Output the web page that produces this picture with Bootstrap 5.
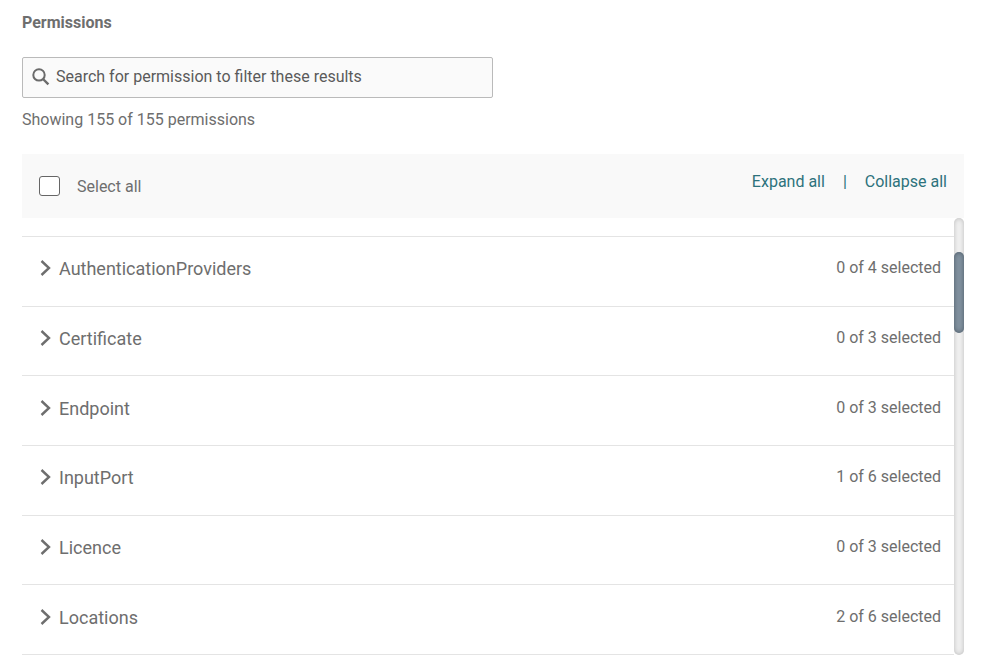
<!DOCTYPE html>
<html lang="en">
<head>
<meta charset="utf-8">
<meta name="viewport" content="width=device-width, initial-scale=1">
<title>Permissions</title>
<link href="https://cdn.jsdelivr.net/npm/bootstrap@5.3.0/dist/css/bootstrap.min.css" rel="stylesheet">
<style>
body { font-family: Roboto, "Liberation Sans", sans-serif; font-size: 16px; line-height: 24px; color: #6e6e6e; background: #fff; }
.page { padding: 11px 21px 15px 22px; }
.page-title { font-size: 16px; line-height: 24px; margin-bottom: 22px; }
.search-box { height: 41px; padding: 0 9px 2px; background: #fafafa; border: 1px solid #bababa; border-radius: 2px; }
.search-box input { margin-left: 6px; color: #5a5a5a; outline: 0; }
.search-box input::placeholder { color: #5a5a5a; opacity: 1; }
.result-count { margin: 10px 0 22px; }
.toolbar { height: 64px; padding: 0 17px; background: #f9f9f9; }
.toolbar .form-check-input { width: 21px; height: 20px; border: 1px solid #666; border-radius: 3px; background-color: #fff; }
.toolbar label { margin-left: 17px; padding-top: 2px; }
.toolbar-links { gap: 18px; padding-bottom: 8px; color: #2d727c; }
.toolbar-links a { color: #2d727c; }
.perm-list { padding-top: 18px; }
.perm-row { border-color: #e4e4e4 !important; padding: 0 13px 4px 18px; color: #6e6e6e; }
.perm-name { font-size: 18px; gap: 7px; }
.perm-name svg { margin-bottom: 2px; }
.perm-count { padding-bottom: 2px; }
.scroll-track { width: 10px; padding-top: 34px; border-radius: 5px; background: #f0f0f0; box-shadow: inset 0 0 5px #bbb; }
.scroll-thumb { height: 81px; border-radius: 5px; background: #8292a0; box-shadow: inset 0 0 5px #4c5a66; }
</style>
<script defer src="https://cdn.jsdelivr.net/npm/bootstrap@5.3.0/dist/js/bootstrap.bundle.min.js"></script>
</head>
<body>
<svg class="d-none" aria-hidden="true">
  <symbol id="chevron" viewBox="0 0 12 18"><path d="M1.5 2l7.5 7L1.5 16" fill="none" stroke="currentColor" stroke-width="2.4"/></symbol>
</svg>
<main class="page d-flex flex-column min-vh-100">
  <h1 class="page-title fw-bold">Permissions</h1>
  <div class="col-6">
    <div class="search-box d-flex align-items-center">
      <svg width="18" height="18" viewBox="0 0 18 18" fill="none" stroke="#6b6b6b" aria-hidden="true"><circle cx="7" cy="6.9" r="5.7" stroke-width="2"/><path d="M11 11l5.4 5.4" stroke-width="2.4"/></svg>
      <input class="border-0 bg-transparent p-0 flex-grow-1" type="text" placeholder="Search for permission to filter these results" aria-label="Search for permission to filter these results">
    </div>
  </div>
  <p class="result-count">Showing 155 of 155 permissions</p>
  <div class="toolbar d-flex align-items-center justify-content-between">
    <div class="d-flex align-items-center">
      <input class="form-check-input m-0" type="checkbox" id="selectAll">
      <label for="selectAll">Select all</label>
    </div>
    <div class="toolbar-links d-flex">
      <a class="text-decoration-none" href="#">Expand all</a><span>|</span><a class="text-decoration-none" href="#">Collapse all</a>
    </div>
  </div>
  <div class="d-flex flex-grow-1">
    <div class="perm-list d-flex flex-column flex-grow-1 border-0">
      <button type="button" class="perm-row flex-fill d-flex align-items-center justify-content-between bg-transparent border-0 border-top"><span class="perm-name d-flex align-items-center"><svg width="12" height="18" aria-hidden="true"><use href="#chevron"/></svg>AuthenticationProviders</span><span class="perm-count">0 of 4 selected</span></button>
      <button type="button" class="perm-row flex-fill d-flex align-items-center justify-content-between bg-transparent border-0 border-top"><span class="perm-name d-flex align-items-center"><svg width="12" height="18" aria-hidden="true"><use href="#chevron"/></svg>Certificate</span><span class="perm-count">0 of 3 selected</span></button>
      <button type="button" class="perm-row flex-fill d-flex align-items-center justify-content-between bg-transparent border-0 border-top"><span class="perm-name d-flex align-items-center"><svg width="12" height="18" aria-hidden="true"><use href="#chevron"/></svg>Endpoint</span><span class="perm-count">0 of 3 selected</span></button>
      <button type="button" class="perm-row flex-fill d-flex align-items-center justify-content-between bg-transparent border-0 border-top"><span class="perm-name d-flex align-items-center"><svg width="12" height="18" aria-hidden="true"><use href="#chevron"/></svg>InputPort</span><span class="perm-count">1 of 6 selected</span></button>
      <button type="button" class="perm-row flex-fill d-flex align-items-center justify-content-between bg-transparent border-0 border-top"><span class="perm-name d-flex align-items-center"><svg width="12" height="18" aria-hidden="true"><use href="#chevron"/></svg>Licence</span><span class="perm-count">0 of 3 selected</span></button>
      <button type="button" class="perm-row flex-fill d-flex align-items-center justify-content-between bg-transparent border-0 border-top border-bottom"><span class="perm-name d-flex align-items-center"><svg width="12" height="18" aria-hidden="true"><use href="#chevron"/></svg>Locations</span><span class="perm-count">2 of 6 selected</span></button>
    </div>
    <div class="scroll-track"><div class="scroll-thumb"></div></div>
  </div>
</main>
</body>
</html>
